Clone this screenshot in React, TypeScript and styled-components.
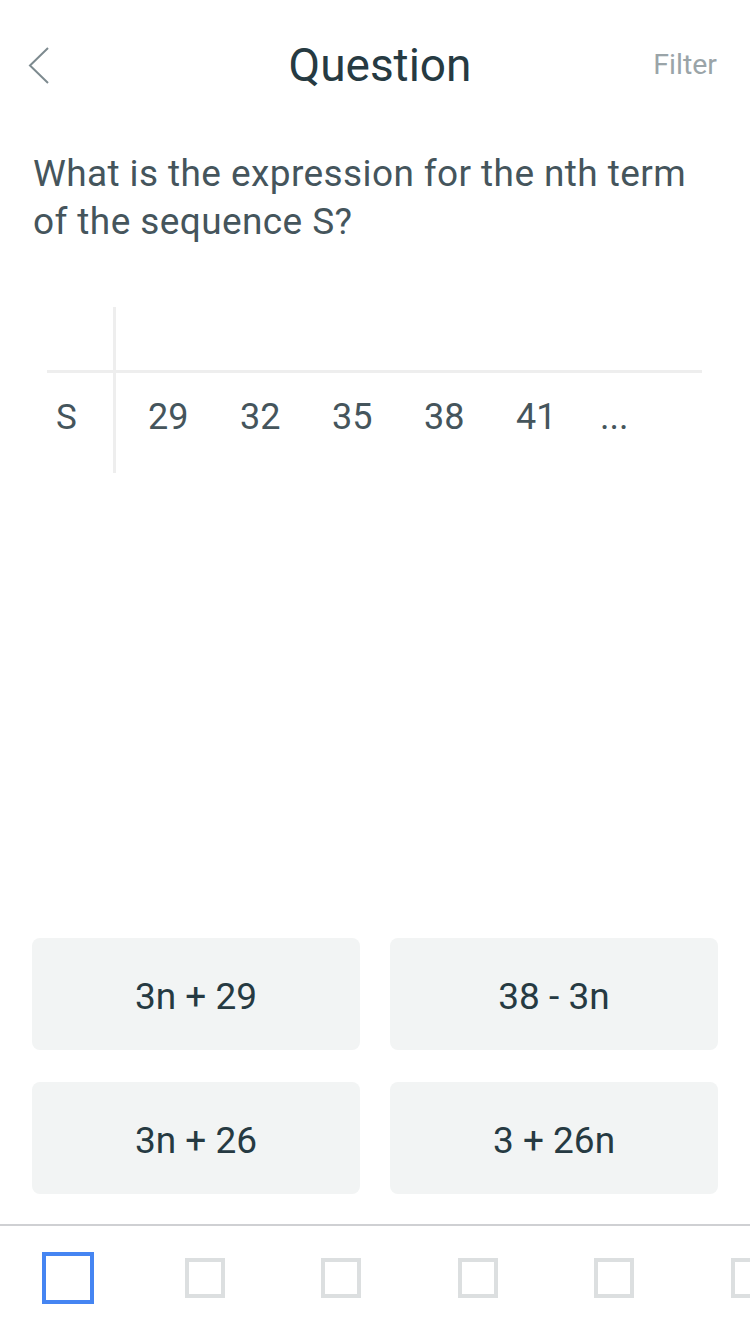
import React from "react";
import styled, { createGlobalStyle } from "styled-components";

const Global = createGlobalStyle`
  html, body { margin: 0; padding: 0; background: #ffffff; }
  body { font-family: Roboto, "Noto Sans", sans-serif; width: 750px; height: 1334px; overflow: hidden; }
  * { box-sizing: border-box; }
`;

const Page = styled.div`
  width: 750px;
  height: 1334px;
  display: flex;
  flex-direction: column;
  background: #fff;
`;

const Header = styled.header`
  height: 130px;
  display: grid;
  grid-template-columns: 120px 1fr 120px;
  align-items: start;
  padding-top: 40px;
`;

const BackButton = styled.button`
  border: none;
  background: none;
  padding: 0 0 0 28px;
  height: 50px;
  display: flex;
  align-items: center;
  cursor: pointer;
`;

const Title = styled.h1`
  margin: 0;
  padding-left: 10px;
  text-align: center;
  font-weight: 400;
  font-size: 46px;
  line-height: 50px;
  color: #263a42;
`;

const FilterLink = styled.span`
  text-align: right;
  padding-right: 33px;
  font-size: 28.5px;
  line-height: 50px;
  color: #9aa4a8;
`;

const QuestionText = styled.p`
  margin: 0;
  padding: 20px 33px 0;
  font-size: 37px;
  letter-spacing: 0.4px;
  line-height: 48px;
  color: #45555c;
`;

const Table = styled.div`
  margin: 61px 48px 0 47px;
  display: grid;
  grid-template-columns: 69px 1fr;
  grid-template-rows: 66px 100px;
`;

const Cell = styled.div<{ $right?: boolean; $bottom?: boolean }>`
  border-right: ${(p) => (p.$right ? "3px solid #eeeeee" : "none")};
  border-bottom: ${(p) => (p.$bottom ? "3px solid #eeeeee" : "none")};
`;

const RowLabel = styled(Cell)`
  display: flex;
  align-items: center;
  padding: 0 0 12px 9px;
  font-size: 35px;
  color: #45555c;
`;

const Values = styled.div`
  display: flex;
  align-items: center;
  padding: 0 0 12px 32px;
  font-size: 36px;
  color: #45555c;
`;

const Value = styled.span<{ $dots?: boolean }>`
  width: 92px;
  flex: none;
  margin-left: ${(p) => (p.$dots ? "-8px" : "0")};
`;

const Spacer = styled.div`
  flex: 1;
`;

const Answers = styled.div`
  display: grid;
  grid-template-columns: 328px 328px;
  column-gap: 30px;
  row-gap: 32px;
  padding: 0 32px;
`;

const Answer = styled.button`
  height: 112px;
  border: none;
  border-radius: 8px;
  background: #f2f4f4;
  padding: 4px 0 0;
  font-family: Roboto, "Noto Sans", sans-serif;
  font-size: 37px;
  color: #263a42;
  cursor: pointer;
`;

const Footer = styled.nav`
  margin-top: 30px;
  border-top: 2px solid #cfd0d3;
  height: 110px;
  display: flex;
  align-items: center;
  overflow: hidden;
  padding-bottom: 4px;
`;

const Tab = styled.div`
  width: 136.5px;
  flex: none;
  display: flex;
  justify-content: center;
`;

const Square = styled.div<{ $active?: boolean }>`
  width: ${(p) => (p.$active ? 52 : 40)}px;
  height: ${(p) => (p.$active ? 52 : 40)}px;
  border: 4px solid ${(p) => (p.$active ? "#4585f2" : "#dcdfe0")};
`;

export default function App() {
  const values = ["29", "32", "35", "38", "41", "..."];
  const answers = ["3n + 29", "38 - 3n", "3n + 26", "3 + 26n"];
  return (
    <Page>
      <Global />
      <Header>
        <BackButton aria-label="Back">
          <svg width="24" height="40" viewBox="0 0 24 40">
            <polyline points="20,3 2,20.5 20,38" fill="none" stroke="#7d8a8f" strokeWidth="2" />
          </svg>
        </BackButton>
        <Title>Question</Title>
        <FilterLink>Filter</FilterLink>
      </Header>
      <QuestionText>
        What is the expression for the nth term
        <br />
        of the sequence S?
      </QuestionText>
      <Table>
        <Cell $right $bottom />
        <Cell $bottom />
        <RowLabel $right>S</RowLabel>
        <Values>
          {values.map((v) => (
            <Value key={v} $dots={v === "..."}>
              {v}
            </Value>
          ))}
          <Spacer />
        </Values>
      </Table>
      <Spacer />
      <Answers>
        {answers.map((a) => (
          <Answer key={a}>{a}</Answer>
        ))}
      </Answers>
      <Footer>
        {[0, 1, 2, 3, 4, 5].map((i) => (
          <Tab key={i}>
            <Square $active={i === 0} />
          </Tab>
        ))}
      </Footer>
    </Page>
  );
}
